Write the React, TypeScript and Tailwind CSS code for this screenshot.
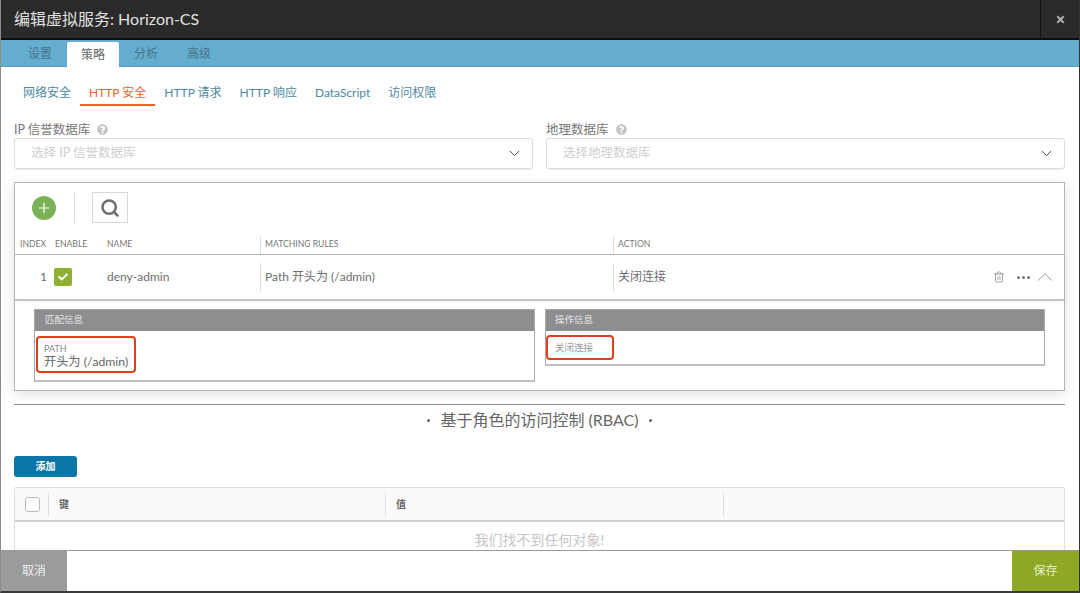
import React from "react";
import { Plus, Search, Trash2, ChevronUp, ChevronDown } from "lucide-react";
import { FaQuestionCircle, FaTimes, FaCheck } from "react-icons/fa";

const font = "font-['Lato','Noto_Sans_CJK_SC',sans-serif]";

function Help() {
  return <FaQuestionCircle className="text-[#c4c4c4] ml-[7px]" size={11} />;
}

function Select({ label, placeholder }: { label: string; placeholder: string }) {
  return (
    <div className="flex-1 min-w-0">
      <div className="flex items-center h-[15px] text-[12.5px] text-[#777777] leading-[15px]">
        {label}
        <Help />
      </div>
      <div className="h-[31px] mt-[1px] border border-[#dcdcdc] rounded-[3px] flex items-center justify-between pl-[16px] pr-[9px] text-[12.5px] text-[#cfcfcf] shadow-[0_1px_1px_rgba(0,0,0,0.08)]">
        <span>{placeholder}</span>
        <ChevronDown size={17} className="text-[#444444]" strokeWidth={1.4} />
      </div>
    </div>
  );
}

export default function App() {
  return (
    <div className={`${font} w-[1080px] h-[593px] overflow-hidden bg-white flex flex-col border-l border-l-[#8a8a8a] border-r border-r-[#333333] border-b-2 border-b-[#3a3a3a]`}>
      <header className="h-[38px] shrink-0 bg-[#2a2a2a] flex items-center justify-between border-b-2 border-b-[#0d0d0d] box-content">
        <h1 className="pl-[13px] text-[16px] text-[#e2e2e2] font-normal">编辑虚拟服务: Horizon-CS</h1>
        <div className="w-[39px] h-full border-l border-l-[#111111] flex items-center justify-center">
          <FaTimes size={11} className="text-[#b0b0b0]" />
        </div>
      </header>

      <nav className="h-[27px] shrink-0 bg-[#64adcf] border-b border-b-[#5a9dbc] flex items-end pl-[13px] gap-[1px] text-[12px]">
        <div className="w-[52px] h-[24px] flex items-center justify-center text-[#48748a]">设置</div>
        <div className="w-[52px] h-[25px] -mb-px bg-white rounded-t-[2px] flex items-center justify-center text-[#666666]">策略</div>
        <div className="w-[52px] h-[24px] flex items-center justify-center text-[#48748a]">分析</div>
        <div className="w-[52px] h-[24px] flex items-center justify-center text-[#48748a]">高级</div>
      </nav>

      <div className="flex-1 min-h-0 overflow-hidden pl-[13px] pr-[14px]">
        <div className="flex mt-[17px] h-[22px] text-[12px] text-[#4b8aa5]">
          <span className="px-[9px] h-full">网络安全</span>
          <span className="px-[9px] h-full text-[#f0622a] border-b-2 border-b-[#f0622a]">HTTP 安全</span>
          <span className="px-[9px] h-full">HTTP 请求</span>
          <span className="px-[9px] h-full">HTTP 响应</span>
          <span className="px-[9px] h-full">DataScript</span>
          <span className="px-[9px] h-full">访问权限</span>
        </div>

        <div className="flex gap-[13px] mt-[16px]">
          <Select label="IP 信誉数据库" placeholder="选择 IP 信誉数据库" />
          <Select label="地理数据库" placeholder="选择地理数据库" />
        </div>

        <section className="mt-[13px] h-[209px] border border-[#b5b5b5] shadow-[0_3px_12px_rgba(0,0,0,0.12)] flex flex-col">
          <div className="h-[54px] flex items-center pl-[17px] pb-[5px]">
            <div className="w-[24px] h-[24px] rounded-full bg-[#7ab356] flex items-center justify-center">
              <Plus size={16} strokeWidth={1.8} className="text-white" />
            </div>
            <div className="w-px h-[30px] bg-[#dddddd] ml-[18px]" />
            <div className="w-[36px] h-[31px] border border-[#d8d8d8] ml-[17px] flex items-center justify-center">
              <Search size={20} strokeWidth={3} className="text-[#6e6e6e]" />
            </div>
          </div>

          <div className="h-[17px] grid grid-cols-[245px_353px_1fr] border-b border-b-[#bcbcbc] box-content text-[8.6px] text-[#777777] leading-[15px]">
            <div className="flex pl-[5px]">
              <span className="w-[35px]">INDEX</span>
              <span className="w-[52px]">ENABLE</span>
              <span>NAME</span>
            </div>
            <div className="border-l border-l-[#dddddd] pl-[4px]">MATCHING RULES</div>
            <div className="border-l border-l-[#dddddd] pl-[4px]">ACTION</div>
          </div>

          <div className="h-[44px] grid grid-cols-[245px_353px_1fr] items-center text-[12px] text-[#6e6e6e] border-b-2 border-b-[#c4c4c4] box-content shadow-[0_1px_4px_rgba(0,0,0,0.05)]">
            <div className="flex items-center">
              <span className="w-[32px] text-right">1</span>
              <span className="ml-[7px] w-[18px] h-[18px] rounded-[2px] bg-[#8fb132] flex items-center justify-center">
                <FaCheck size={10} className="text-white" />
              </span>
              <span className="ml-[35px]">deny-admin</span>
            </div>
            <div className="h-[28px] border-l border-l-[#dddddd] pl-[4px] flex items-center">Path 开头为 (/admin)</div>
            <div className="h-[28px] border-l border-l-[#dddddd] pl-[4px] flex items-center justify-between pr-[6px]">
              <span>关闭连接</span>
              <span className="flex items-center text-[#8a8a8a]">
                <Trash2 size={12} strokeWidth={1.5} />
                <span className="ml-[12px] flex gap-[2px]">
                  <i className="w-[3px] h-[3px] rounded-full bg-[#777777]" />
                  <i className="w-[3px] h-[3px] rounded-full bg-[#777777]" />
                  <i className="w-[3px] h-[3px] rounded-full bg-[#777777]" />
                </span>
                <ChevronUp size={26} strokeWidth={0.8} className="ml-[2px]" />
              </span>
            </div>
          </div>

          <div className="flex items-start gap-[10px] pl-[19px] pr-[19px] pt-[8px]">
            <div className="relative w-[501px] h-[73px] border border-[#a8a8a8] border-b-2 border-b-[#c0c0c0]">
              <div className="h-[21px] bg-[#8e8e90] flex items-center pl-[10px] text-[9.5px] text-[#e6e6e6]">匹配信息</div>
              <div className="pl-[9px] pt-[12px] text-[#777777]">
                <div className="text-[9px] leading-[11px] text-[#8a8a8a]">PATH</div>
                <div className="text-[12.2px] leading-[16px] text-[#666666]">开头为 (/admin)</div>
              </div>
              <div className="absolute left-[1px] top-[26px] w-[100px] h-[37px] border-2 border-[#e2401c] rounded-[4px]" />
            </div>
            <div className="relative flex-1 h-[57px] border border-[#a8a8a8] border-b-2 border-b-[#c0c0c0]">
              <div className="h-[21px] bg-[#8e8e90] flex items-center pl-[9px] text-[9.5px] text-[#e6e6e6]">操作信息</div>
              <div className="pl-[9px] pt-[11px] text-[9.5px] leading-[12px] text-[#9a9a9a]">关闭连接</div>
              <div className="absolute left-0 top-[25px] w-[68px] h-[25px] border-2 border-[#e2401c] rounded-[4px]" />
            </div>
          </div>
        </section>

        <div className="mt-[13px] h-[40px] border-t border-t-[#8f8f8f] flex items-center justify-center gap-[10px] text-[16px] text-[#666666] pb-[9px]">
          <span className="w-[3px] h-[3px] rounded-full bg-[#666666]" />
          <span>基于角色的访问控制 (RBAC)</span>
          <span className="w-[3px] h-[3px] rounded-full bg-[#666666]" />
        </div>

        <button className="block mt-[12px] w-[63px] h-[21px] rounded-[3px] bg-[#0a76a8] text-white text-[10px] font-bold">添加</button>

        <div className="mt-[10px] border border-[#dddddd] rounded-t-[2px]">
          <div className="h-[32px] bg-[#fafafa] border-b-2 border-b-[#d0d0d0] box-content flex items-center text-[10px] font-bold text-[#666666]">
            <div className="w-[34px] h-[23px] flex items-center pl-[10px] border-r border-r-[#dddddd]">
              <span className="w-[15px] h-[15px] border border-[#bbbbbb] rounded-[3px] bg-white" />
            </div>
            <div className="w-[337px] h-[23px] flex items-center pl-[10px] border-r border-r-[#dddddd]">键</div>
            <div className="w-[338px] h-[23px] flex items-center pl-[10px] border-r border-r-[#dddddd]">值</div>
          </div>
          <div className="h-[40px] pt-[9px] text-center text-[14px] leading-[18px] text-[#c6c6c6]">我们找不到任何对象!</div>
        </div>
      </div>

      <footer className="h-[41px] shrink-0 bg-white border-t border-t-[#9a9a9a] flex items-stretch justify-between text-[12px] relative">
        <button className="w-[66px] bg-[#9b9b9d] text-[#eeeeee]">取消</button>
        <button className="w-[67px] bg-[#8ca825] text-[#e8efc8]">保存</button>
      </footer>
    </div>
  );
}
